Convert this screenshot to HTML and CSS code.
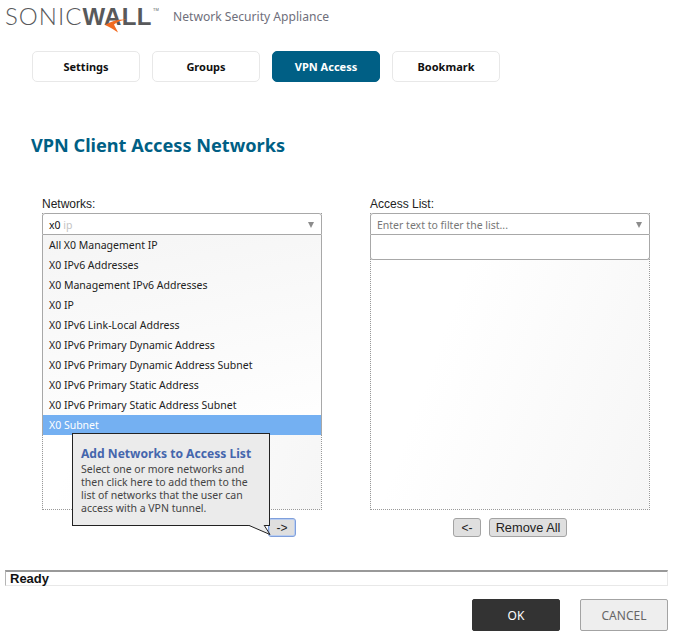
FILE: index.html
```html
<!DOCTYPE html>
<html>
<head>
<meta charset="UTF-8">
<title>VPN Access</title>
<link rel="stylesheet" href="styles.css">
</head>
<body>

<div class="header">
   <div class="logo">
      <span class="logoSonic">SONIC</span><span class="logoWall">WALL</span><span class="logoTm">TM</span>
      <svg class="swoosh" width="22" height="15" viewBox="0 0 22 15">
         <path d="M0 7C6 3 13 1 22 1.500C16 2 12 4 9 6.500C10 9 12 12 13 14.500C9 12 5 9 0 7Z" fill="#f26b21"/>
      </svg>
   </div>
   <div class="product">Network Security Appliance</div>
</div>

<div class="tabs">
   <div class="tab">Settings</div>
   <div class="tab">Groups</div>
   <div class="tab active">VPN Access</div>
   <div class="tab">Bookmark</div>
</div>

<h1 class="title">VPN Client Access Networks</h1>

<div class="columns">
   <div class="pane">
      <div class="paneLabel">Networks:</div>
      <div class="listBox">
         <div class="combo">
            <span>x0 <span class="hint">ip</span></span>
            <span class="arrow"></span>
         </div>
         <div class="dropdown">
            <div class="option">All X0 Management IP</div>
            <div class="option">X0 IPv6 Addresses</div>
            <div class="option">X0 Management IPv6 Addresses</div>
            <div class="option">X0 IP</div>
            <div class="option">X0 IPv6 Link-Local Address</div>
            <div class="option">X0 IPv6 Primary Dynamic Address</div>
            <div class="option">X0 IPv6 Primary Dynamic Address Subnet</div>
            <div class="option">X0 IPv6 Primary Static Address</div>
            <div class="option">X0 IPv6 Primary Static Address Subnet</div>
            <div class="option selected">X0 Subnet</div>
         </div>
      </div>
      <div class="paneButtons leftButtons">
         <button class="smallBtn focused">-&gt;</button>
      </div>
      <div class="tooltip">
         <div class="tooltipTitle">Add Networks to Access List</div>
         <div class="tooltipText">Select one or more networks and<br>then click here to add them to the<br>list of networks that the user can<br>access with a VPN tunnel.</div>
         <svg class="tail" width="26" height="11" viewBox="0 0 26 11">
            <path d="M1 0L23 9.500L17 0" fill="#ebebeb" stroke="#222"/>
         </svg>
      </div>
   </div>

   <div class="pane">
      <div class="paneLabel">Access List:</div>
      <div class="listBox">
         <div class="combo">
            <span class="placeholder">Enter text to filter the list...</span>
            <span class="arrow"></span>
         </div>
         <div class="emptyList"></div>
      </div>
      <div class="paneButtons">
         <button class="smallBtn">&lt;-</button>
         <button class="smallBtn wide">Remove All</button>
      </div>
   </div>
</div>

<div class="status">Ready</div>

<div class="footer">
   <button class="okBtn">OK</button>
   <button class="cancelBtn">CANCEL</button>
</div>

</body>
</html>
```

FILE: styles.css
```css
html, body {
   margin: 0;
   height: 641px;
   overflow: hidden;
}
body {
   background: #ffffff;
   font-family: 'Noto Sans', sans-serif;
   font-size: 11px;
   color: #222222;
}
.header {
   display: flex;
   align-items: flex-start;
   height: 51px;
   padding-left: 5px;
}
.logo {
   position: relative;
   width: 168px;
   margin-top: 1px;
   font-family: 'Liberation Sans', sans-serif;
   font-size: 24px;
   line-height: 30px;
   color: #58595b;
   white-space: nowrap;
}
.logoSonic {
   font-family: 'Lato', sans-serif;
   font-weight: 300;
   letter-spacing: 1px;
}
.logoWall {
   font-weight: bold;
   letter-spacing: 0.300px;
}
.logoTm {
   position: absolute;
   left: 148px;
   top: 6px;
   font-size: 4px;
   line-height: 5px;
}
.swoosh {
   position: absolute;
   left: 100px;
   top: 17px;
}
.product {
   margin-top: 9px;
   font-size: 12.100px;
   line-height: 16px;
   color: #6f6f7b;
}
.tabs {
   display: flex;
   gap: 12px;
   padding-left: 32px;
}
.tab {
   width: 108px;
   height: 31px;
   box-sizing: border-box;
   border: 1px solid #e8e8e8;
   border-radius: 5px;
   text-align: center;
   font-weight: bold;
   line-height: 29px;
   color: #111111;
}
.tab.active {
   background: #005f85;
   border-color: #005f85;
   color: #ffffff;
}
.title {
   margin: 51px 0 0 31px;
   font-size: 18.150px;
   line-height: 24px;
   font-weight: bold;
   color: #005f85;
}
.columns {
   display: flex;
   gap: 48px;
   margin-top: 40px;
   padding-left: 42px;
}
.pane {
   position: relative;
   width: 280px;
}
.paneLabel {
   height: 16px;
   font-family: 'Liberation Sans', sans-serif;
   font-size: 12px;
   line-height: 14px;
   color: #222222;
}
.listBox {
   height: 297px;
   box-sizing: border-box;
   border: 1px dotted #999999;
   border-top: 0;
   font-size: 10.500px;
   background: linear-gradient(110deg, #ffffff 30%, #f6f6f6 100%);
}
.combo {
   display: flex;
   justify-content: space-between;
   align-items: center;
   height: 22px;
   box-sizing: border-box;
   margin: 0 -1px;
   padding: 1px 6px 0;
   background: #ffffff;
   border: 1px solid #a8a8a8;
   border-radius: 3px 3px 0 0;
   color: #111111;
}
.hint {
   color: #c4c4c4;
}
.placeholder {
   color: #777777;
}
.arrow {
   width: 0;
   height: 0;
   margin-right: 1px;
   border-left: 3.500px solid transparent;
   border-right: 3.500px solid transparent;
   border-top: 6px solid #8c8c8c;
}
.dropdown {
   margin: 0 -1px;
   border-left: 1px solid #a8a8a8;
   border-right: 1px solid #a8a8a8;
   background: linear-gradient(170deg, #f5f5f5 0%, #ffffff 100%);
}
.option {
   height: 20px;
   padding-left: 6px;
   line-height: 21px;
   color: #222222;
}
.option.selected {
   background: #74b0f2;
   color: #ffffff;
}
.emptyList {
   height: 25px;
   box-sizing: border-box;
   margin: 0 -1px;
   background: #ffffff;
   border: 1px solid #a8a8a8;
   border-top: 0;
   border-radius: 0 0 3px 3px;
}
.paneButtons {
   display: flex;
   justify-content: center;
   gap: 8px;
   margin-top: 8px;
}
.leftButtons {
   justify-content: flex-start;
   padding-left: 226px;
}
.smallBtn {
   width: 28px;
   height: 19px;
   box-sizing: border-box;
   padding: 0;
   background: #dfdfdf;
   border: 1px solid #a3a3a3;
   border-radius: 3px;
   font-family: 'Liberation Sans', sans-serif;
   font-size: 12px;
   color: #222222;
}
.smallBtn.wide {
   width: 78px;
   font-size: 12.800px;
}
.smallBtn.focused {
   border: 1px solid #7f9fdc;
   box-shadow: 0 0 0 1px #b9cdf0 inset;
}
.tooltip {
   position: absolute;
   left: 30px;
   top: 236px;
   width: 198px;
   height: 93px;
   box-sizing: border-box;
   padding: 12px 8px 0;
   background: #ebebeb;
   border: 1px solid #222222;
   color: #444444;
}
.tooltipTitle {
   height: 17px;
   font-size: 12.100px;
   line-height: 16px;
   font-weight: bold;
   color: #4566ad;
}
.tooltipText {
   font-size: 10.500px;
   line-height: 13px;
}
.tail {
   position: absolute;
   left: 174px;
   top: 91px;
}
.status {
   height: 16px;
   box-sizing: border-box;
   margin: 33px 17px 0 5px;
   padding-left: 4px;
   border-top: 2px solid #999999;
   border-left: 1px solid #b5b5b5;
   border-right: 1px solid #e8e8e8;
   border-bottom: 1px solid #e8e8e8;
   font-family: 'Liberation Sans', sans-serif;
   font-size: 13px;
   line-height: 13px;
   font-weight: bold;
   color: #111111;
}
.footer {
   display: flex;
   justify-content: flex-end;
   gap: 20px;
   margin-top: 13px;
   padding-right: 17px;
}
.okBtn, .cancelBtn {
   width: 88px;
   height: 32px;
   padding: 0;
   border-radius: 2px;
   font-family: 'Noto Sans', sans-serif;
   font-size: 12px;
}
.okBtn {
   background: #333333;
   border: 1px solid #333333;
   color: #ffffff;
}
.cancelBtn {
   background: #eeeeee;
   border: 1px solid #a3a3a3;
   color: #666666;
}
```
